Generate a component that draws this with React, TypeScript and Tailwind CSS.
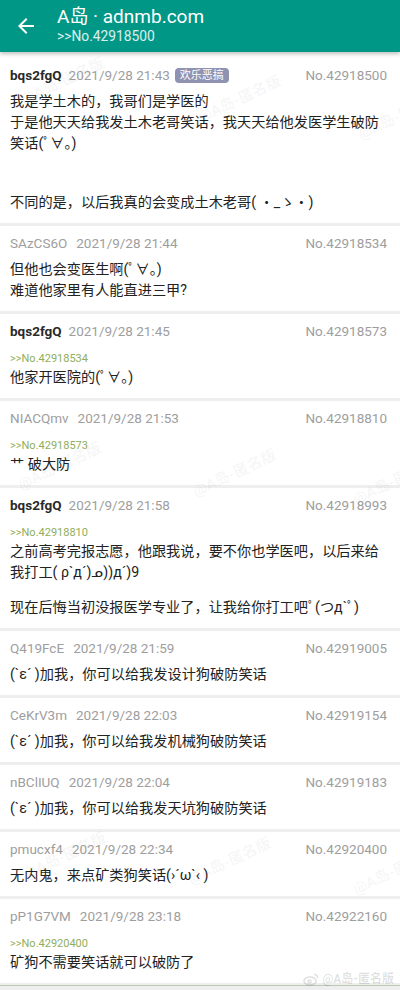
import React from 'react';

type Post = {
  uid: string;
  time: string;
  no: string;
  op?: boolean;
  tag?: string;
  quote?: string;
  lines: (string | number)[];
};

const POSTS: Post[] = [
  {
    uid: 'bqs2fgQ',
    time: '2021/9/28 21:43',
    no: '42918500',
    op: true,
    tag: '欢乐恶搞',
    lines: ['我是学土木的，我哥们是学医的', '于是他天天给我发土木老哥笑话，我天天给他发医学生破防', '笑话(ﾟ∀。)', 38, '不同的是，以后我真的会变成土木老哥( ・_ゝ・)'],
  },
  { uid: 'SAzCS6O', time: '2021/9/28 21:44', no: '42918534', lines: ['但他也会变医生啊(ﾟ∀。)', '难道他家里有人能直进三甲?'] },
  { uid: 'bqs2fgQ', time: '2021/9/28 21:45', no: '42918573', op: true, quote: '42918534', lines: ['他家开医院的(ﾟ∀。)'] },
  { uid: 'NIACQmv', time: '2021/9/28 21:53', no: '42918810', quote: '42918573', lines: ['⺾ 破大防'] },
  {
    uid: 'bqs2fgQ',
    time: '2021/9/28 21:58',
    no: '42918993',
    op: true,
    quote: '42918810',
    lines: ['之前高考完报志愿，他跟我说，要不你也学医吧，以后来给', '我打工( ρ`д´)ᓄ))д´)9', 14, '现在后悔当初没报医学专业了，让我给你打工吧ﾟ(つд`ﾟ)'],
  },
  { uid: 'Q419FcE', time: '2021/9/28 21:59', no: '42919005', lines: ['(`ε´ )加我，你可以给我发设计狗破防笑话'] },
  { uid: 'CeKrV3m', time: '2021/9/28 22:03', no: '42919154', lines: ['(`ε´ )加我，你可以给我发机械狗破防笑话'] },
  { uid: 'nBClIUQ', time: '2021/9/28 22:04', no: '42919183', lines: ['(`ε´ )加我，你可以给我发天坑狗破防笑话'] },
  { uid: 'pmucxf4', time: '2021/9/28 22:34', no: '42920400', lines: ['无内鬼，来点矿类狗笑话(›´ω`‹ )'] },
  { uid: 'pP1G7VM', time: '2021/9/28 23:18', no: '42922160', quote: '42920400', lines: ['矿狗不需要笑话就可以破防了'] },
];

// faint "@A岛-匿名版" marks laid over the screenshot
const WATERMARKS = [
  [18, 70], [195, 88], [355, 105],
  [15, 455], [190, 462], [350, 470],
  [20, 845], [185, 850], [350, 860],
];

function PostItem({ post, first }: { post: Post; first?: boolean }) {
  return (
    <div className={`${first ? 'pt-[13px]' : 'pt-[7px]'} pb-[10px] px-[10px] bg-white`}>
      <div className="flex items-center h-5 text-[13.5px] text-[#9e9e9e]">
        <span className={post.op ? 'font-bold text-[#2a2a2a]' : ''}>{post.uid}</span>
        <span className={post.op ? 'ml-[7px]' : 'ml-[9px]'}>{post.time}</span>
        {post.tag && (
          <span className="ml-[5px] h-[15px] px-[5px] rounded-[4px] bg-[#8f93b1] text-white text-[11px] leading-[15px]">
            {post.tag}
          </span>
        )}
        <span className="ml-auto mr-[3px]">No.{post.no}</span>
      </div>
      {post.quote && (
        <div className="mt-[10px] h-4 leading-4 text-[11px] text-[#8fae5c]">&gt;&gt;No.{post.quote}</div>
      )}
      <div className={post.quote ? 'mt-0' : 'mt-[6px]'}>
        {post.lines.map((l, i) =>
          typeof l === 'number' ? (
            <div key={i} style={{ height: l }} />
          ) : (
            <div key={i} className="text-[14.2px] leading-[21px] text-[#222] whitespace-nowrap">
              {l}
            </div>
          )
        )}
      </div>
    </div>
  );
}

export default function App() {
  return (
    <div
      className="relative w-[400px] h-[990px] overflow-hidden bg-[#eeeeee]"
      style={{ fontFamily: 'Roboto, "Noto Sans CJK SC", sans-serif' }}
    >
      {/* App bar */}
      <div className="relative z-10 h-[52px] bg-[#009787] flex items-center shadow-[0_2px_4px_rgba(0,0,0,0.25)]">
        <svg className="ml-[14px] w-6 h-6" viewBox="0 0 24 24" fill="white">
          <path d="M20 11H7.83l5.59-5.59L12 4l-8 8 8 8 1.41-1.41L7.83 13H20v-2z" />
        </svg>
        <div className="ml-[19px] -mt-[3px] flex flex-col text-white">
          <span className="text-[19px] leading-[22px]">A岛 · adnmb.com</span>
          <span className="text-[13.8px] leading-[16px] text-white/85">&gt;&gt;No.42918500</span>
        </div>
      </div>

      {/* Posts */}
      <div className="flex flex-col gap-[3px]">
        {POSTS.map((p, i) => (
          <PostItem key={p.no} post={p} first={i === 0} />
        ))}
      </div>

      {WATERMARKS.map(([x, y], i) => (
        <span
          key={i}
          className="absolute pointer-events-none text-[15px] font-bold text-black/[0.05] -rotate-[25deg] whitespace-nowrap"
          style={{ left: x, top: y }}
        >
          @A岛-匿名版
        </span>
      ))}

      <div className="absolute left-0 right-0 top-[985px] h-[1px] bg-[#b9ccb3]" />
      <div className="absolute right-[6px] top-[970px] flex items-center gap-[3px] text-[12px] font-bold text-black/[0.12] pointer-events-none">
        <svg width="16" height="13" viewBox="0 0 16 13" fill="none" stroke="currentColor" strokeWidth="1.6">
          <ellipse cx="7" cy="8" rx="6" ry="4" />
          <circle cx="6.5" cy="8.5" r="1.5" />
          <path d="M11 1.5a3 3 0 0 1 3.5 3.5" />
        </svg>
        <span>@A岛-匿名版</span>
      </div>
    </div>
  );
}
